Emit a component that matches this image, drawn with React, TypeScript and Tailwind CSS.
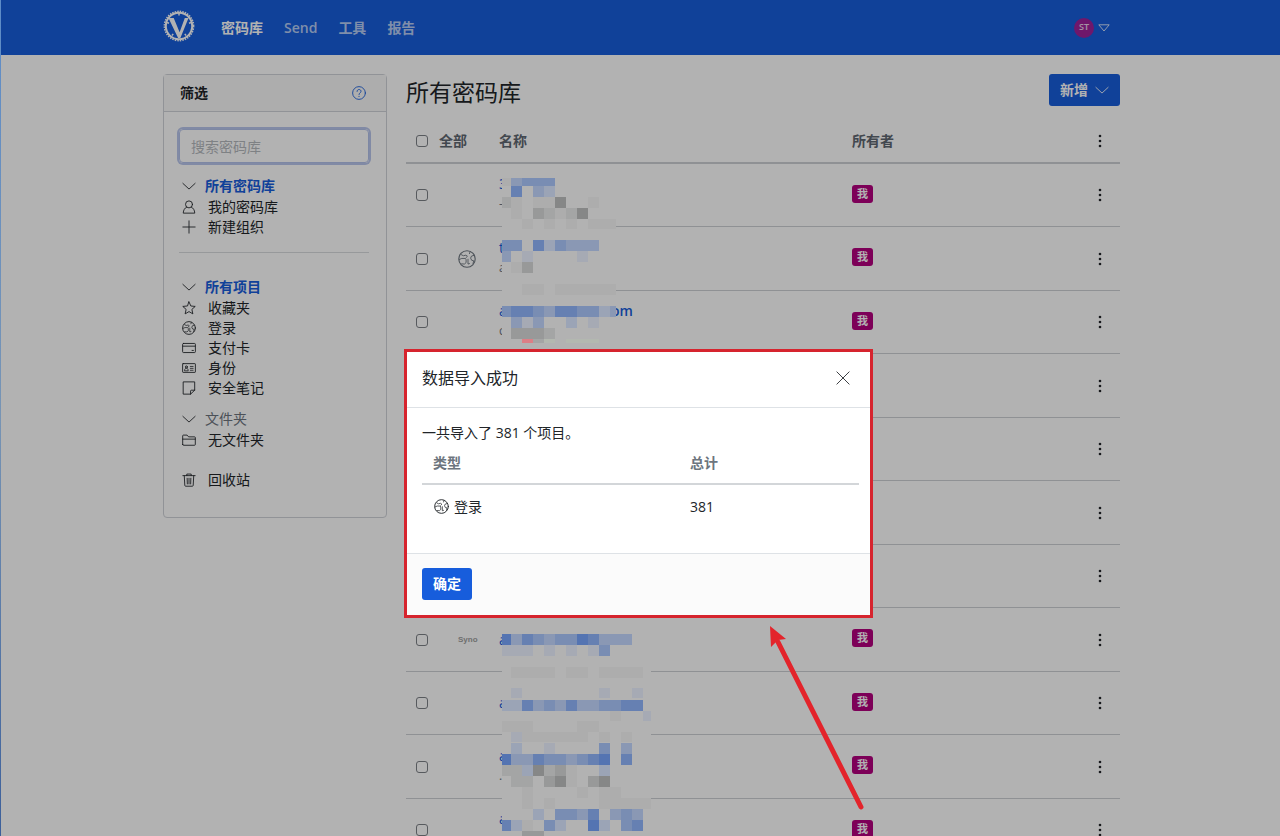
import { useState } from 'react'
import type { ReactNode } from 'react'

interface IconProps {
  className?: string
}

interface CipherRow {
  id: number
  name: string
  nameEnd?: string
  sub?: string
  icon?: 'globe' | 'syno'
}

interface MosaicRow {
  y: number
  h: number
  cells: string
}

function Svg({ className, children }: IconProps & { children: ReactNode }) {
  return (
    <svg viewBox="0 0 16 16" fill="none" stroke="currentColor" strokeLinejoin="round" strokeLinecap="round" className={className}>
      {children}
    </svg>
  )
}

const ChevronIcon = ({ className }: IconProps) => (
  <Svg className={className}>
    <path d="M1 5l7 6.5L15 5" />
  </Svg>
)

const UserIcon = ({ className }: IconProps) => (
  <Svg className={className}>
    <circle cx="8" cy="5" r="4" />
    <path d="M5.4 8C3 9.2 1.6 11.6 1.4 15h13.2C14.400 11.600 13 9.200 10.600 8" />
  </Svg>
)

const PlusIcon = ({ className }: IconProps) => (
  <Svg className={className}>
    <path d="M8 1v14M1 8h14" />
  </Svg>
)

const StarIcon = ({ className }: IconProps) => (
  <Svg className={className}>
    <path d="M8 1l2.100 4.700 5 .5-3.800 3.400 1.100 5.100L8 12.100l-4.400 2.600 1.100-5.100L.9 6.200l5-.5z" />
  </Svg>
)

const GlobeIcon = ({ className }: IconProps) => (
  <Svg className={className}>
    <circle cx="8" cy="8" r="7.300" />
    <path d="M3 4.200l1.800.9L7 4.600l1.400 1-1.200 1.100M1.200 8.400l2.200-.9h3.200l.6 1.100v2.600l-1.500 1.300-2.500-.2M8.900 8.200v4.300l1.300-.4M10.700 1.600l-.5 1.600M14.200 4.800l-2.200.6-.8 1.800 1 2 1.700.3-.5 2.600" strokeWidth="0.800" />
  </Svg>
)

const CardIcon = ({ className }: IconProps) => (
  <Svg className={className}>
    <rect x="0.700" y="2.800" width="14.600" height="10.400" rx="1" />
    <path d="M1 5.900h14M11.500 10.800h1.500" />
  </Svg>
)

const IdIcon = ({ className }: IconProps) => (
  <Svg className={className}>
    <rect x="0.700" y="3" width="14.600" height="10" rx="0.600" />
    <circle cx="5" cy="6.800" r="1.200" />
    <path d="M2.900 10.800c0-1.800.9-2.500 2.100-2.500s2.100.7 2.100 2.500zM9.500 6.200h3.200M9.500 8.400h3.200M9.500 10.600h3.200" strokeWidth="0.900" />
  </Svg>
)

const NoteIcon = ({ className }: IconProps) => (
  <Svg className={className}>
    <path d="M1.800 1h12.700v9.500L9.800 15h-8zM9.800 15v-3.500a1 1 0 0 1 1-1h3.700" />
  </Svg>
)

const FolderIcon = ({ className }: IconProps) => (
  <Svg className={className}>
    <path d="M.8 13.200V3.200a.8.8 0 0 1 .8-.8h4.200l1.700 2h6.900a.8.8 0 0 1 .8.8v8a.8.8 0 0 1-.8.8H1.600a.8.8 0 0 1-.8-.8zM.8 7h14.400" />
  </Svg>
)

const TrashIcon = ({ className }: IconProps) => (
  <Svg className={className}>
    <path d="M1 3h14M5.500 3V1.200h5V3M2.600 3.200l.6 11a1 1 0 0 0 1 .9h7.600a1 1 0 0 0 1-.9l.6-11M5.900 6l.2 6.500M8 6v6.500M10.100 6l-.2 6.500" />
  </Svg>
)

const HelpIcon = ({ className }: IconProps) => (
  <Svg className={className}>
    <circle cx="8" cy="8" r="7.300" />
    <path d="M5.800 6.200c0-1.400 1-2.200 2.200-2.200s2.300.8 2.300 2.100C10.300 7.800 8 7.900 8 9.700M8 11.800v.3" />
  </Svg>
)

const CloseIcon = ({ className }: IconProps) => (
  <Svg className={className}>
    <path d="M1 1l14 14M15 1L1 15" />
  </Svg>
)

const KebabIcon = ({ className }: IconProps) => (
  <svg viewBox="0 0 4 14" fill="currentColor" className={className}>
    <circle cx="2" cy="2" r="1.300" />
    <circle cx="2" cy="7" r="1.300" />
    <circle cx="2" cy="12" r="1.300" />
  </svg>
)

const Logo = ({ className }: IconProps) => (
  <svg viewBox="0 0 32 32" fill="none" stroke="white" className={className}>
    <circle cx="16" cy="16" r="14.600" strokeWidth="1.600" strokeDasharray="1.500 1.060" />
    <circle cx="16" cy="16" r="13.200" strokeWidth="2" />
    <path d="M5.500 8h5.200l5.900 14.200L21.800 8h3.700L17.400 28h-2.300z" fill="white" stroke="none" />
    <path d="M16 3v2.500M4 12.500l2 .8M28 12.500l-2 .8M9 25.500l1.200-1.600M23 25.500l-1.200-1.600" strokeWidth="1.500" />
  </svg>
)

const rows: CipherRow[] = [
  { id: 1, name: '3', sub: '-' },
  { id: 2, name: 't', sub: 'a', icon: 'globe' },
  { id: 3, name: 'a', nameEnd: 'om', sub: 'c' },
  { id: 4, name: '' },
  { id: 5, name: '' },
  { id: 6, name: '' },
  { id: 7, name: '' },
  { id: 8, name: 'a', icon: 'syno' },
  { id: 9, name: 'a' },
  { id: 10, name: 'a', sub: '.' },
  { id: 11, name: 'a', sub: '.' },
]

// one letter per cell, '.' is left empty
const palette: Record<string, string> = {
  B: '#5474b2',
  b: '#6680b2',
  m: '#798db3',
  l: '#8a98b4',
  s: '#9ba4b6',
  p: '#a6aab4',
  f: '#adadad',
  g: '#a4a5a5',
  d: '#989999',
  k: '#868787',
  r: '#dc7f86',
  w: '#b3b8b0',
}

const cellX = [502, 511, 522, 533, 544, 555, 566, 577, 588, 599, 610, 621, 632, 643, 651]

const topRows: MosaicRow[] = [
  { y: 178, h: 8, cells: 'flmmm' },
  { y: 186, h: 11, cells: '.b.ls' },
  { y: 197, h: 11, cells: 'gf.ffk..f' },
  { y: 208, h: 11, cells: '.f.dgfgk' },
  { y: 219, h: 10, cells: '..f.f.f.fff' },
  { y: 240, h: 11, cells: 'mm.bsmlll' },
  { y: 251, h: 11, cells: 'l.p....p' },
  { y: 262, h: 11, cells: '.fd' },
  { y: 284, h: 11, cells: '..ff.ffffff' },
  { y: 306, h: 11, cells: 'mbbmlbbmmsl' },
  { y: 317, h: 11, cells: '.lpl..s.p' },
  { y: 328, h: 11, cells: '.dddg' },
  { y: 339, h: 4, cells: '..rgw.www' },
]

const bottomRows: MosaicRow[] = [
  { y: 634, h: 11, cells: 'BlbmlmmBblll' },
  { y: 645, h: 11, cells: 'ppp.p.p.pm' },
  { y: 667, h: 11, cells: '.ffff.ff.ffff' },
  { y: 688, h: 10, cells: '.p.......p..p' },
  { y: 700, h: 11, cells: 'ssblmlbllmmbb' },
  { y: 711, h: 10, cells: '..........f..p' },
  { y: 721, h: 11, cells: 'fff....ff' },
  { y: 732, h: 10, cells: '.pffffff.f.f' },
  { y: 743, h: 11, cells: '.s..p....m.l' },
  { y: 754, h: 11, cells: 'BllbmmlmbB.b' },
  { y: 765, h: 11, cells: 'ggskgdf..s' },
  { y: 776, h: 11, cells: '.gg.dkf.dk' },
  { y: 787, h: 11, cells: '..f....f.ff' },
  { y: 798, h: 11, cells: '..f.f....fffff' },
  { y: 809, h: 11, cells: '...s.mmlb.lml' },
  { y: 820, h: 11, cells: 'bsf.ms..Bs.mb' },
  { y: 831, h: 5, cells: '..dd' },
]

function MosaicCells({ data, right }: { data: MosaicRow[]; right: number }) {
  return data.map((row) =>
    row.cells.split('').map((cell, i) =>
      cell === '.' ? null : (
        <rect
          key={`${row.y}-${i}`}
          x={cellX[i]}
          y={row.y}
          width={Math.min(cellX[i + 1], right) - cellX[i]}
          height={row.h}
          fill={palette[cell]}
        />
      )
    )
  )
}

function Mosaic({ className }: IconProps) {
  return (
    <svg viewBox="502 174 150 662" shapeRendering="crispEdges" className={className}>
      <rect x="502" y="174" width="114" height="174" fill="#b2b2b2" />
      <rect x="502" y="630" width="149" height="206" fill="#b2b2b2" />
      <MosaicCells data={topRows} right={616} />
      <MosaicCells data={bottomRows} right={651} />
    </svg>
  )
}

function NavBar() {
  return (
    <header className="bg-[#175ddc] pl-[3px]">
      <div className="mx-auto flex h-[55px] max-w-[957px] items-center">
        <a href="#" aria-label="Vaultwarden" className="-mt-1 mr-[26px]">
          <Logo className="size-8" />
        </a>
        <nav className="flex flex-1 gap-[21px] font-semibold text-white/70">
          <a href="#" className="font-bold text-white">密码库</a>
          <a href="#">Send</a>
          <a href="#">工具</a>
          <a href="#">报告</a>
        </nav>
        <button type="button" aria-label="账户" className="flex items-center gap-1 pr-[10px]">
          <span className="flex size-5 items-center justify-center rounded-full bg-[#a0229a] text-[9px] font-semibold text-white/80">ST</span>
          <svg viewBox="0 0 12 8" fill="none" stroke="white" strokeOpacity="0.800" strokeLinejoin="round" className="h-2 w-3">
            <path d="M.8.8h10.400L6 7z" />
          </svg>
        </button>
      </div>
    </header>
  )
}

interface FilterItemProps {
  icon: ReactNode
  label: string
}

function FilterTitle({ label, muted }: { label: string; muted?: boolean }) {
  return (
    <button type="button" className="flex h-[22px] items-center gap-[9px] pl-[3px]">
      <ChevronIcon className="size-[14px]" />
      <span className={muted ? 'text-[#6d757e]' : 'font-bold text-[#175ddc]'}>{label}</span>
    </button>
  )
}

function FilterItem({ icon, label }: FilterItemProps) {
  return (
    <li>
      <button type="button" className="flex h-5 items-center gap-3 pl-[3px]">
        {icon}
        <span>{label}</span>
      </button>
    </li>
  )
}

function Filters() {
  const [search, setSearch] = useState('')
  const icon = 'size-[14px]'

  return (
    <aside className="w-56 shrink-0 self-start rounded border border-[#d0d3d8]">
      <div className="flex h-[37px] items-center justify-between border-b border-[#d0d3d8] bg-[#f8f8f8] pr-5 pl-4">
        <h2 className="font-bold">筛选</h2>
        <a href="#" aria-label="帮助" className="text-[#175ddc]">
          <HelpIcon className="size-[14px]" />
        </a>
      </div>
      <div className="pt-[17px] pr-[17px] pb-[27px] pl-[15px]">
        <input
          type="search"
          aria-label="搜索密码库"
          placeholder="搜索密码库"
          value={search}
          onChange={(e) => setSearch(e.target.value)}
          className="block h-[34px] w-full rounded-sm border border-[#b4c2ea] px-[11px] ring-2 ring-[#b9c6ec] outline-none placeholder:text-[#b5b9be]"
        />
        <div className="mt-3">
          <FilterTitle label="所有密码库" />
          <ul>
            <FilterItem icon={<UserIcon className={icon} />} label="我的密码库" />
            <FilterItem icon={<PlusIcon className={icon} />} label="新建组织" />
          </ul>
        </div>
        <hr className="mt-[15px] border-[#d9dbde]" />
        <div className="mt-[23px]">
          <FilterTitle label="所有项目" />
          <ul>
            <FilterItem icon={<StarIcon className={icon} />} label="收藏夹" />
            <FilterItem icon={<GlobeIcon className={icon} />} label="登录" />
            <FilterItem icon={<CardIcon className={icon} />} label="支付卡" />
            <FilterItem icon={<IdIcon className={icon} />} label="身份" />
            <FilterItem icon={<NoteIcon className={icon} />} label="安全笔记" />
          </ul>
        </div>
        <div className="mt-[10px]">
          <FilterTitle label="文件夹" muted />
          <ul>
            <FilterItem icon={<FolderIcon className={icon} />} label="无文件夹" />
          </ul>
        </div>
        <ul className="mt-5">
          <FilterItem icon={<TrashIcon className={icon} />} label="回收站" />
        </ul>
      </div>
    </aside>
  )
}

const checkbox =
  'block size-3 appearance-none rounded-[3px] border border-[#7d8187] checked:bg-[#175ddc]'

function VaultTable() {
  return (
    <table className="mt-[10px] w-full table-fixed border-separate border-spacing-0 text-left">
      <thead>
        <tr className="h-11 text-[#5f6771] *:border-b-2 *:border-[#cdd0d5]">
          <th className="w-[33px] pl-[10px]">
            <input type="checkbox" id="select-all" className={checkbox} />
          </th>
          <th className="w-[60px] font-bold">
            <label htmlFor="select-all">全部</label>
          </th>
          <th className="font-bold">名称</th>
          <th className="w-[228px] font-bold">所有者</th>
          <th className="w-10">
            <button type="button" aria-label="选项" className="mx-auto block text-[#212529]">
              <KebabIcon className="h-[14px] w-1" />
            </button>
          </th>
        </tr>
      </thead>
      <tbody>
        {rows.map((row) => (
          <tr key={row.id} className="h-[63px] *:border-b *:border-[#cdd0d5] even:h-16">
            <td className="pl-[10px]">
              <input type="checkbox" aria-label={`选择 ${row.id}`} className={checkbox} />
            </td>
            <td className="pl-[19px] text-[#6d757e]">
              {row.icon === 'globe' && <GlobeIcon className="size-[18px]" />}
              {row.icon === 'syno' && (
                <span className="block font-['Liberation_Sans',sans-serif] text-[8px] font-bold text-[#a0a0a0]">Syno</span>
              )}
            </td>
            <td>
              <a href="#" className="flex h-[18px] items-center text-[#175ddc]">
                <span className="w-[112px]">{row.name}</span>
                {row.nameEnd && <span className="font-semibold">{row.nameEnd}</span>}
              </a>
              {row.sub && <span className="block h-[22px] text-xs leading-[22px] text-[#6d757e]">{row.sub}</span>}
            </td>
            <td className="pb-[3px]">
              <span className="flex h-[18px] w-[21px] items-center justify-center rounded-[3px] bg-[#b4007f] text-[11px] font-bold text-white">我</span>
            </td>
            <td>
              <button type="button" aria-label="选项" className="mx-auto block">
                <KebabIcon className="h-[14px] w-1" />
              </button>
            </td>
          </tr>
        ))}
      </tbody>
    </table>
  )
}

function ImportDialog({ onClose }: { onClose: () => void }) {
  return (
    <div className="fixed inset-0 z-30 flex items-start justify-center pt-[349px] pr-[3px]">
      <div className="relative w-[469px]">
        <div role="dialog" aria-labelledby="import-title" className="border-[3px] border-[#d6242e] bg-white">
          <div className="flex h-14 items-center justify-between border-b border-[#dee2e6] pr-5 pb-[3px] pl-[15px]">
            <h2 id="import-title" className="text-base">数据导入成功</h2>
            <button type="button" aria-label="关闭" onClick={onClose}>
              <CloseIcon className="size-[14px]" />
            </button>
          </div>
          <div className="pt-[15px] pr-[11px] pb-[25px] pl-[15px]">
            <p>一共导入了 381 个项目。</p>
            <table className="w-full table-fixed border-separate border-spacing-0 text-left">
              <thead>
                <tr className="h-[42px] text-[#6d757e] *:border-b-2 *:border-[#d3d6d9] *:px-[11px]">
                  <th className="w-[257px] font-bold">类型</th>
                  <th className="font-bold">总计</th>
                </tr>
              </thead>
              <tbody>
                <tr className="h-[43px] *:px-[11px]">
                  <td>
                    <span className="flex items-center gap-[5px]">
                      <GlobeIcon className="ml-px size-[15px]" />
                      登录
                    </span>
                  </td>
                  <td>381</td>
                </tr>
              </tbody>
            </table>
          </div>
          <div className="border-t border-[#dee2e6] bg-[#fbfbfb] pt-[14px] pb-[15px] pl-[15px]">
            <button type="button" onClick={onClose} className="h-8 rounded-[3px] bg-[#175ddc] px-[11px] font-bold text-white">
              确定
            </button>
          </div>
        </div>
        <svg viewBox="766 622 102 192" className="absolute top-full left-[362px] mt-1 h-[192px] w-[102px]">
          <path d="M861 807L778 642" stroke="#e3242b" strokeWidth="5" strokeLinecap="round" />
          <path d="M770 626l16 13-8 1-7 7z" fill="#e3242b" />
        </svg>
      </div>
    </div>
  )
}

export default function App() {
  const [dialogOpen, setDialogOpen] = useState(true)

  return (
    <div className="h-screen overflow-hidden bg-white font-['Open_Sans','Noto_Sans_CJK_SC',sans-serif] text-sm text-[#212529]">
      <NavBar />
      <div className="pl-[3px]">
        <div className="mx-auto flex max-w-[957px] gap-[19px] pt-[19px]">
          <Filters />
          <main className="relative min-w-0 flex-1">
            <div className="flex h-9 items-start justify-between">
              <h1 className="text-[23px] leading-9">所有密码库</h1>
              <button type="button" className="flex h-8 items-center gap-[7px] rounded-[3px] bg-[#175ddc] px-[11px] font-bold text-white">
                新增
                <ChevronIcon className="size-[14px]" />
              </button>
            </div>
            <VaultTable />
            <Mosaic className="absolute top-[100px] left-24 z-20 h-[662px] w-[150px]" />
          </main>
        </div>
      </div>
      {dialogOpen && <div className="fixed inset-0 z-10 bg-black/30" />}
      <div className="fixed inset-y-0 left-0 z-10 w-px bg-linear-to-b from-[#5d8cc8] via-[#7794b4] to-[#3c5f9a]" />
      {dialogOpen && <ImportDialog onClose={() => setDialogOpen(false)} />}
    </div>
  )
}
